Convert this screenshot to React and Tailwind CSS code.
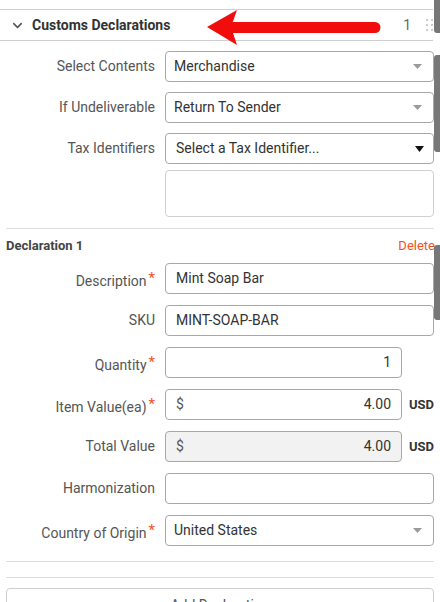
import { ChevronDown } from "lucide-react"

const GrayCaret = () => (
  <svg width="9" height="5" viewBox="0 0 9 5" className="shrink-0">
    <path d="M0 0 L9 0 L4.5 5 Z" fill="#9a9a9a" />
  </svg>
)

function Label({ text, required }) {
  return (
    <div
      className={
        "w-[155px] shrink-0 flex justify-end items-start text-[14px] text-[#555] " +
        (required ? "pt-[6px]" : "")
      }
    >
      <span>{text}</span>
      {required && <span className="text-[#f4511e] text-[15px] leading-[14px] ml-[2px]">*</span>}
    </div>
  )
}

function Row({ label, required, children }) {
  return (
    <div className="flex items-center gap-[10px]">
      <Label text={label} required={required} />
      {children}
    </div>
  )
}

function Select({ value }) {
  return (
    <div className="flex-1 h-[31px] border border-[#a8a8a8] rounded-[4px] flex items-center justify-between pl-[8px] pr-[11px] text-[14px] text-[#333]">
      <span>{value}</span>
      <GrayCaret />
    </div>
  )
}

function Input({ value, right, bg }) {
  return (
    <div
      className={
        "flex-1 h-[31px] border border-[#a8a8a8] rounded-[4px] flex items-center px-[10px] text-[14px] text-[#333] " +
        (right ? "justify-end " : "") +
        (bg ? "bg-[#f2f2f2]" : "bg-white")
      }
    >
      {value}
    </div>
  )
}

function Money({ value, disabled }) {
  return (
    <div className="flex-1 flex items-center gap-[7px]">
      <div
        className={
          "flex-1 h-[31px] border border-[#a8a8a8] rounded-[4px] flex items-center justify-between pl-[10px] pr-[10px] text-[14px] text-[#333] " +
          (disabled ? "bg-[#f2f2f2]" : "bg-white")
        }
      >
        <span className="text-[#555]">$</span>
        <span>{value}</span>
      </div>
      <span className="text-[13px] font-bold text-[#333] w-[25px]">USD</span>
    </div>
  )
}

export default function App() {
  return (
    <div className="relative w-[440px] h-[602px] overflow-hidden bg-white font-['Roboto','Liberation_Sans',sans-serif]">
      <div className="w-[433px] pt-[9px]">
        <div className="h-[32px] border-t border-b border-[#cfcfcf] flex items-center">
          <ChevronDown size={15} strokeWidth={2.5} color="#555" className="ml-[10px]" />
          <span className="ml-[7px] text-[14px] font-bold text-[#333]">Customs Declarations</span>
          <span className="ml-auto text-[14px] text-[#666]">1</span>
          <div className="ml-[15px] grid grid-cols-2 gap-x-[3px] gap-y-[3px]">
            {[0, 1, 2, 3, 4, 5].map((i) => (
              <span key={i} className="w-[2px] h-[2px] rounded-full bg-[#bbb]" />
            ))}
          </div>
        </div>
      </div>

      <div className="w-[434px] pl-[6px] pt-[10px] flex flex-col">
        <div className="flex flex-col gap-[10px] -ml-[6px]">
          <Row label="Select Contents">
            <Select value="Merchandise" />
          </Row>
          <Row label="If Undeliverable">
            <Select value="Return To Sender" />
          </Row>
          <Row label="Tax Identifiers">
            <div className="flex-1 h-[31px] border border-[#a8a8a8] rounded-[4px] flex items-center justify-between pl-[10px] pr-[9px] text-[14px] text-[#333]">
              <span>Select a Tax Identifier...</span>
              <svg width="9" height="6" viewBox="0 0 9 6">
                <path d="M0 0 L9 0 L4.5 6 Z" fill="#111" />
              </svg>
            </div>
          </Row>
        </div>
        <div className="ml-[159px] mt-[6px] h-[47px] border border-[#d0d0d0] rounded-[4px]" />

        <div className="mt-[11px] border-t border-[#dedede]" />

        <div className="h-[34px] flex items-center justify-between">
          <span className="text-[13px] font-bold text-[#444]">Declaration 1</span>
          <span className="text-[13px] text-[#f4511e] -mr-[1px]">Delete</span>
        </div>

        <div className="flex flex-col gap-[11px] -ml-[6px]">
          <Row label="Description" required>
            <Input value="Mint Soap Bar" />
          </Row>
          <Row label="SKU">
            <Input value="MINT-SOAP-BAR" />
          </Row>
          <Row label="Quantity" required>
            <div className="flex-1 flex pr-[32px]">
              <Input value="1" right />
            </div>
          </Row>
          <Row label="Item Value(ea)" required>
            <Money value="4.00" />
          </Row>
          <Row label="Total Value">
            <Money value="4.00" disabled />
          </Row>
          <Row label="Harmonization">
            <Input value="" />
          </Row>
          <Row label="Country of Origin" required>
            <Select value="United States" />
          </Row>
        </div>

        <div className="mt-[15px] border-t border-[#dedede]" />
        <div className="mt-[15px] border-t border-[#dedede]" />
        <div className="mt-[10px] h-[34px] border border-[#cfcfcf] rounded-[4px] flex items-center justify-center text-[14px] text-[#555]">
          Add Declaration
        </div>
      </div>

      {/* red annotation arrow */}
      <svg className="absolute left-[205px] top-[8px]" width="180" height="40" viewBox="0 0 180 40">
        <path d="M25 14 L170 14 A5.5 5.5 0 0 1 170 25 L25 25 Z" fill="#f20d0d" />
        <path d="M2 19 L32 2 L26 19 L32 37 Z" fill="#f20d0d" />
      </svg>

      {/* scroll indicators */}
      <div className="absolute right-0 top-0 w-[6px] h-[33px] rounded-bl-[3px] bg-[#777]" />
      <div className="absolute right-0 top-[55px] w-[6px] h-[97px] rounded-l-[3px] bg-[#777]" />
      <div className="absolute right-0 top-[245px] w-[6px] h-[75px] rounded-l-[3px] bg-[#777]" />
    </div>
  )
}
